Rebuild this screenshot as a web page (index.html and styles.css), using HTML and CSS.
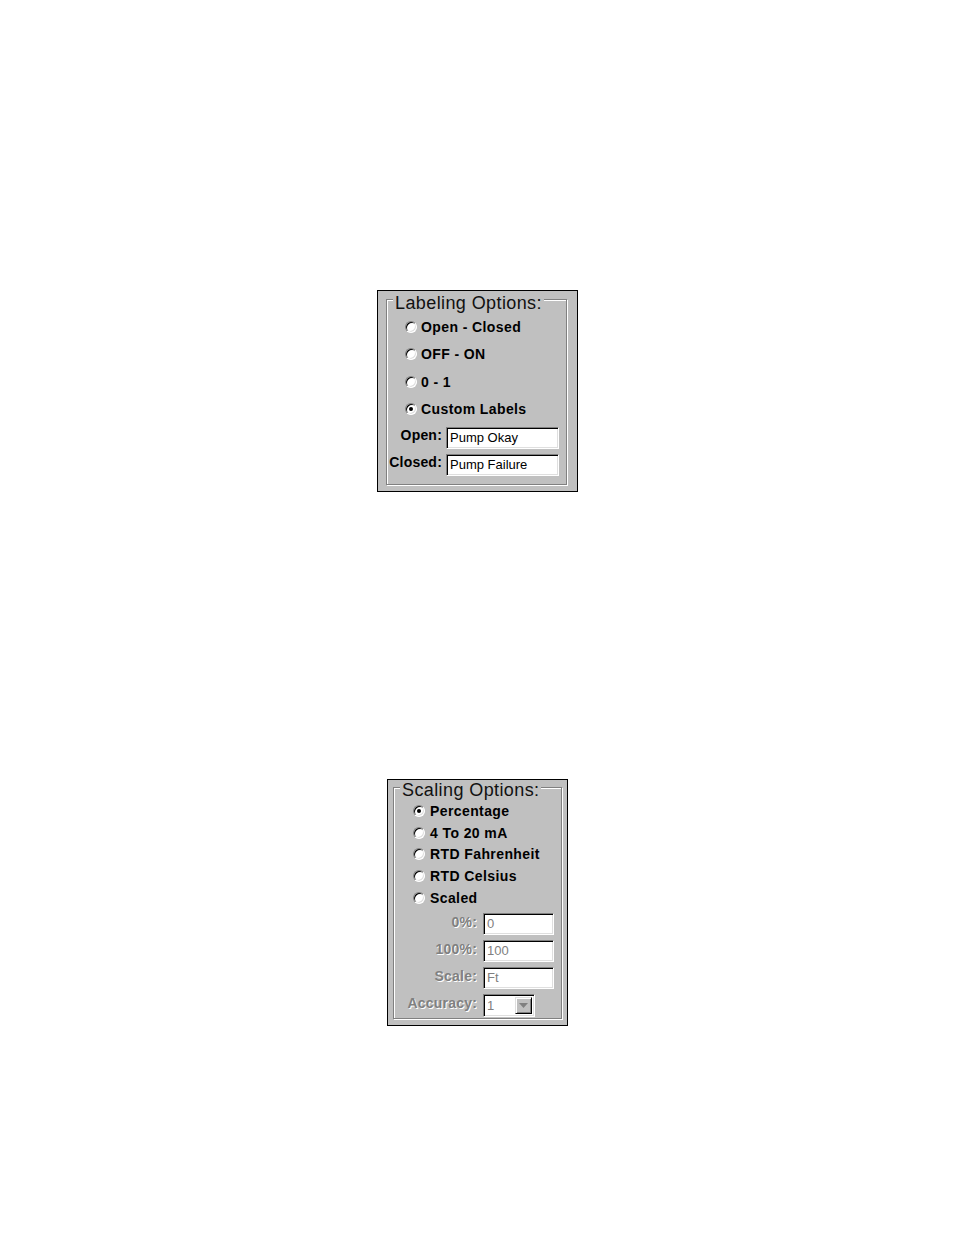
FILE: index.html
```html
<!DOCTYPE html>
<html>
<head>
<meta charset="utf-8">
<link rel="stylesheet" href="styles.css">
</head>
<body>
<div class="page">
  <div class="panel panel-label">
    <div class="group group-label">
      <div class="title">Labeling Options:</div>
      <div class="radios radios-label">
        <div class="radio-row"><span class="radio"></span><span class="rlabel">Open - Closed</span></div>
        <div class="radio-row"><span class="radio"></span><span class="rlabel">OFF - ON</span></div>
        <div class="radio-row"><span class="radio"></span><span class="rlabel">0 - 1</span></div>
        <div class="radio-row"><span class="radio checked"></span><span class="rlabel">Custom Labels</span></div>
      </div>
      <div class="fields fields-label">
        <div class="field-row"><span class="flabel">Open:</span><span class="input">Pump Okay</span></div>
        <div class="field-row"><span class="flabel">Closed:</span><span class="input">Pump Failure</span></div>
      </div>
    </div>
  </div>

  <div class="panel panel-scale">
    <div class="group group-scale">
      <div class="title title-scale">Scaling Options:</div>
      <div class="radios radios-scale">
        <div class="radio-row"><span class="radio checked"></span><span class="rlabel">Percentage</span></div>
        <div class="radio-row"><span class="radio"></span><span class="rlabel">4 To 20 mA</span></div>
        <div class="radio-row"><span class="radio"></span><span class="rlabel">RTD Fahrenheit</span></div>
        <div class="radio-row"><span class="radio"></span><span class="rlabel">RTD Celsius</span></div>
        <div class="radio-row"><span class="radio"></span><span class="rlabel">Scaled</span></div>
      </div>
      <div class="fields fields-scale">
        <div class="field-row"><span class="flabel disabled">0%:</span><span class="input dis">0</span></div>
        <div class="field-row"><span class="flabel disabled">100%:</span><span class="input dis">100</span></div>
        <div class="field-row"><span class="flabel disabled">Scale:</span><span class="input dis">Ft</span></div>
        <div class="field-row"><span class="flabel disabled">Accuracy:</span><span class="input dis combo"><span class="combo-text">1</span><span class="combo-btn"><svg width="9" height="5" viewBox="0 0 9 5"><polygon points="0,0 9,0 4.5,5" fill="#808080"/></svg></span></span></div>
      </div>
    </div>
  </div>
</div>
</body>
</html>
```

FILE: styles.css
```css
html, body {
  margin: 0;
  padding: 0;
  background: #ffffff;
}
.page {
  padding-top: 290px;
  display: flex;
  flex-direction: column;
  align-items: flex-start;
}
.panel {
  box-sizing: border-box;
  border: 1px solid #000;
  background: #c0c0c0;
  font-family: "Liberation Sans", Arial, sans-serif;
  color: #000;
}
.panel-label {
  margin-left: 377px;
  width: 201px;
  height: 202px;
  padding: 8px 0 0 8px;
}
.panel-scale {
  margin-left: 387px;
  margin-top: 287px;
  width: 181px;
  height: 247px;
  padding: 7px 0 0 5px;
}
.group {
  box-sizing: border-box;
  border: 1px solid #808080;
  box-shadow: inset 1px 1px 0 #fff, 1px 1px 0 #fff;
  display: flex;
  flex-direction: column;
  align-items: flex-start;
}
.group-label {
  width: 181px;
  height: 186px;
}
.group-scale {
  width: 169px;
  height: 232px;
}
.title {
  margin-top: -7px;
  margin-left: 6px;
  padding: 0 2px;
  background: #c0c0c0;
  font-size: 18px;
  line-height: 20px;
  height: 20px;
  letter-spacing: 0.4px;
  color: #111;
}
.title-scale {
  margin-top: -8px;
}
.radios {
  display: flex;
  flex-direction: column;
}
.radios-label {
  margin-top: 0;
  padding-left: 18px;
}
.radios-label .radio-row {
  height: 27.5px;
}
.radios-scale {
  margin-top: 0;
  padding-left: 19px;
}
.radios-scale .radio-row {
  height: 21.75px;
}
.radio-row {
  display: flex;
  align-items: center;
  gap: 4px;
}
.radios-scale .radio-row {
  gap: 5px;
}
.radio {
  box-sizing: border-box;
  width: 12px;
  height: 12px;
  border-radius: 50%;
  background: #fff;
  border: 1px solid;
  border-color: #808080 #ffffff #ffffff #808080;
  box-shadow: inset 1px 1px 0 #000, inset -1px -1px 0 #dfdfdf;
  display: flex;
  align-items: center;
  justify-content: center;
  flex: none;
}
.radio.checked::after {
  content: "";
  width: 4px;
  height: 4px;
  border-radius: 50%;
  background: #000;
}
.rlabel {
  font-weight: bold;
  font-size: 14px;
  line-height: 16px;
  letter-spacing: 0.4px;
}
.fields {
  display: flex;
  flex-direction: column;
}
.fields-label {
  margin-top: 4px;
  gap: 5px;
}
.fields-scale {
  margin-top: 4px;
  gap: 5px;
}
.field-row {
  display: flex;
  align-items: flex-start;
}
.flabel {
  font-weight: bold;
  font-size: 14px;
  line-height: 16px;
  text-align: right;
  letter-spacing: 0.2px;
}
.fields-label .flabel {
  width: 55px;
  margin-right: 4px;
}
.fields-scale .flabel {
  width: 83px;
  margin-right: 6px;
  margin-top: 1px;
}
.flabel.disabled {
  color: #808080;
  text-shadow: 1px 1px 0 #fff;
}
.input {
  box-sizing: border-box;
  height: 22px;
  background: #fff;
  border: 1px solid;
  border-color: #808080 #ffffff #ffffff #808080;
  box-shadow: inset 1px 1px 0 #000, inset -1px -1px 0 #dfdfdf;
  font-size: 13px;
  line-height: 20px;
  padding-left: 3px;
  color: #000;
  display: flex;
  align-items: center;
}
.fields-label .input {
  width: 113px;
}
.fields-scale .input {
  width: 71px;
}
.input.dis {
  color: #808080;
}
.fields-scale .input.combo {
  width: 52px;
  height: 23px;
  padding: 2px 2px 2px 3px;
  justify-content: space-between;
}
.combo-text {
  line-height: 17px;
}
.combo-btn {
  box-sizing: border-box;
  width: 17px;
  height: 17px;
  background: #c0c0c0;
  border: 1px solid;
  border-color: #dfdfdf #000 #000 #dfdfdf;
  box-shadow: inset 1px 1px 0 #fff, inset -1px -1px 0 #808080;
  display: flex;
  align-items: center;
  justify-content: center;
}
```
